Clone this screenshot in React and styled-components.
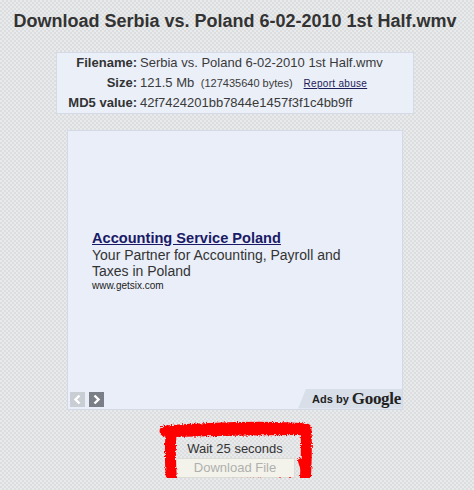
import React from 'react';
import styled, { createGlobalStyle } from 'styled-components';

const GlobalStyle = createGlobalStyle`
  body {
    margin: 0;
    background: repeating-conic-gradient(#dcdddf 0 25%, #e9eaeb 0 50%) 0 0 / 4px 4px;
    font-family: 'Liberation Sans', Arial, sans-serif;
  }
`;

const Page = styled.div`
  width: 470px;
  display: flex;
  flex-direction: column;
  align-items: center;
`;

const Title = styled.h1`
  margin: 11px 0 0;
  font-size: 18px;
  line-height: 21px;
  font-weight: bold;
  color: #333;
  white-space: nowrap;
`;

const InfoBox = styled.div`
  margin-top: 20px;
  width: 358px;
  box-sizing: border-box;
  background: #eaeff8;
  border: 1px solid #d4dbe6;
  display: grid;
  grid-template-columns: 80px auto;
  column-gap: 3px;
  row-gap: 0;
  padding: 0 0 0;
  line-height: 19.5px;
`;

const Label = styled.div`
  text-align: right;
  font-size: 13px;
  font-weight: bold;
  color: #333;
`;

const Value = styled.div`
  font-size: 13px;
  color: #3a3a3a;
  white-space: nowrap;
`;

const Small = styled.span`
  font-size: 11px;
  margin-left: 3px;
`;

const AbuseLink = styled.a`
  font-size: 10px;
  color: #1c1c5a;
  text-decoration: underline;
  margin-left: 11px;
  letter-spacing: 0.3px;
`;

const AdBox = styled.div`
  margin-top: 16px;
  width: 336px;
  height: 280px;
  box-sizing: border-box;
  background: #e9eef8;
  border: 1px solid #d3dae5;
  display: flex;
  flex-direction: column;
`;

const AdContent = styled.div`
  padding: 99px 0 0 24px;
  width: 270px;
`;

const AdHeadline = styled.a`
  display: block;
  font-size: 14.6px;
  line-height: 17px;
  font-weight: bold;
  color: #1a1a66;
  text-decoration: underline;
`;

const AdText = styled.div`
  font-size: 14px;
  line-height: 16.5px;
  color: #333;
`;

const AdUrl = styled.div`
  font-size: 10px;
  line-height: 11px;
  color: #222;
`;

const AdBar = styled.div`
  margin-top: auto;
  height: 20px;
  display: flex;
  align-items: flex-end;
  justify-content: space-between;
`;

const Arrows = styled.div`
  display: flex;
  gap: 4px;
  padding: 0 0 2px 2px;
`;

const ArrowButton = styled.div`
  width: 15px;
  height: 15px;
  background: ${p => (p.active ? '#7a7e86' : '#c9cdd4')};
  display: flex;
  align-items: center;
  justify-content: center;
`;

const GoogleTab = styled.div`
  height: 20px;
  padding: 0 1px 0 14px;
  background: #d8dfe9;
  clip-path: polygon(8px 0, 100% 0, 100% 100%, 0 100%);
  display: flex;
  align-items: center;
  gap: 3px;
  color: #222;
`;

const AdsBy = styled.span`
  font-size: 11px;
  font-weight: bold;
`;

const GoogleWord = styled.span`
  font-family: 'Liberation Serif', 'Times New Roman', serif;
  font-size: 17px;
  font-weight: bold;
  letter-spacing: -0.3px;
`;

const DownloadWrap = styled.div`
  position: relative;
  margin-top: 31px;
  width: 150px;
  display: flex;
  flex-direction: column;
  align-items: center;
`;

const WaitText = styled.div`
  font-size: 13px;
  line-height: 16px;
  color: #333;
`;

const DownloadButton = styled.button`
  margin-top: 1px;
  width: 119px;
  height: 20px;
  padding: 0;
  background: #f3f3ec;
  border: 1px solid #dcdcd6;
  font-family: 'Liberation Sans', Arial, sans-serif;
  font-size: 13px;
  color: #b0b0ac;
`;

const Scribble = styled.svg`
  position: absolute;
  left: 0;
  top: -20px;
  pointer-events: none;
  overflow: visible;
`;

const Chevron = ({ dir }) => (
  <svg width="9" height="11" viewBox="0 0 9 11">
    <path
      d={dir === 'left' ? 'M6.5 1.5 L2.5 5.5 L6.5 9.5' : 'M2.5 1.5 L6.5 5.5 L2.5 9.5'}
      stroke="#fff"
      strokeWidth="2.4"
      fill="none"
    />
  </svg>
);

export default function App() {
  return (
    <Page>
      <GlobalStyle />
      <Title>Download Serbia vs. Poland 6-02-2010 1st Half.wmv</Title>

      <InfoBox>
        <Label>Filename:</Label>
        <Value>Serbia vs. Poland 6-02-2010 1st Half.wmv</Value>
        <Label>Size:</Label>
        <Value>
          121.5 Mb <Small>(127435640 bytes)</Small>
          <AbuseLink href="#">Report abuse</AbuseLink>
        </Value>
        <Label>MD5 value:</Label>
        <Value>42f7424201bb7844e1457f3f1c4bb9ff</Value>
      </InfoBox>

      <AdBox>
        <AdContent>
          <AdHeadline href="#">Accounting Service Poland</AdHeadline>
          <AdText>Your Partner for Accounting, Payroll and Taxes in Poland</AdText>
          <AdUrl>www.getsix.com</AdUrl>
        </AdContent>
        <AdBar>
          <Arrows>
            <ArrowButton>
              <Chevron dir="left" />
            </ArrowButton>
            <ArrowButton active>
              <Chevron dir="right" />
            </ArrowButton>
          </Arrows>
          <GoogleTab>
            <AdsBy>Ads by</AdsBy>
            <GoogleWord>Google</GoogleWord>
          </GoogleTab>
        </AdBar>
      </AdBox>

      <DownloadWrap>
        <WaitText>Wait 25 seconds</WaitText>
        <DownloadButton disabled>Download File</DownloadButton>
        <Scribble width="156" height="72" viewBox="0 0 156 72">
          <defs>
            <filter id="rough" x="-10%" y="-10%" width="120%" height="120%">
              <feTurbulence type="fractalNoise" baseFrequency="0.9" numOctaves="2" result="n" />
              <feDisplacementMap in="SourceGraphic" in2="n" scale="4" />
            </filter>
          </defs>
          <g filter="url(#rough)" fill="none" stroke="#f00" strokeLinecap="round" strokeLinejoin="round">
            <path d="M5 10 C 50 7, 110 5, 146 8 C 147 30, 146 48, 145 64 C 100 67, 50 66, 12 64 C 10 45, 10 28, 11 12" strokeWidth="11" />
            <path d="M14 13 C 60 12, 110 11, 141 11 M141 40 L 148 62 M 20 61 C 60 61, 110 61, 140 60" strokeWidth="6" />
          </g>
        </Scribble>
      </DownloadWrap>
    </Page>
  );
}
